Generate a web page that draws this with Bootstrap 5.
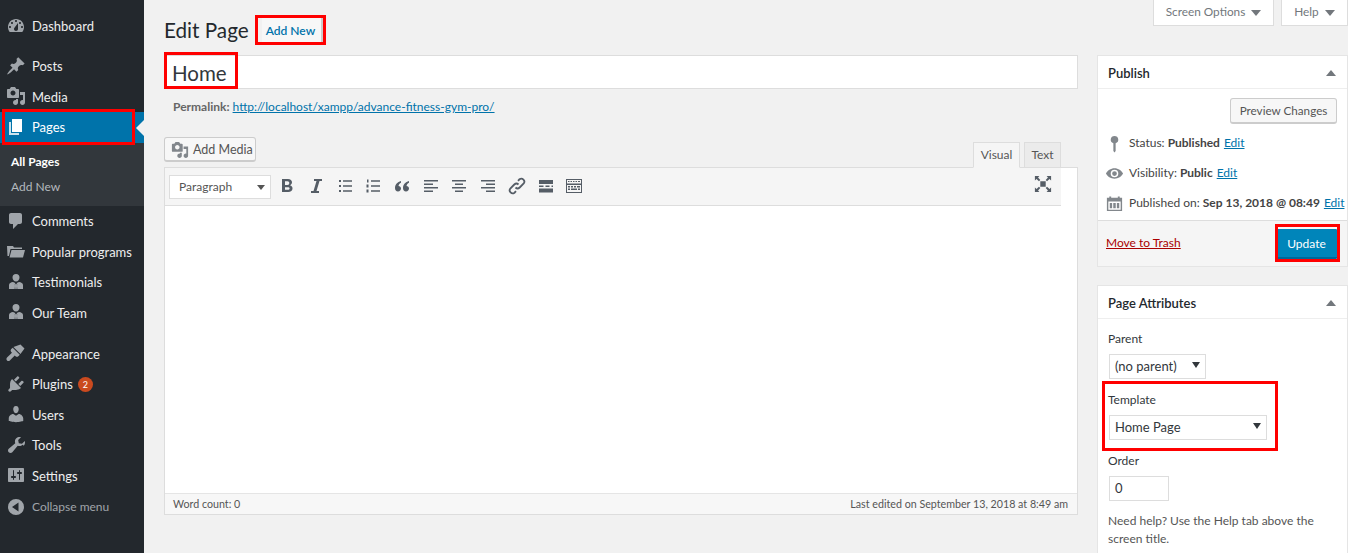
<!doctype html>
<html lang="en"><head><meta charset="utf-8"><title>Edit Page</title>
<link href="https://cdn.jsdelivr.net/npm/bootstrap@5.3.0/dist/css/bootstrap.min.css" rel="stylesheet">
<style>
html,body{height:553px;overflow:hidden}
body{background:#f1f1f1;font:13px/1.4 Lato,"Noto Sans",sans-serif;color:#444;position:relative}
a{color:#0073aa}
.wp-side{width:144px;height:553px;background:#23282d;flex:none;padding-top:10.500px}
.mi{height:30.500px;display:flex;align-items:center;color:#eee;padding:1px 0 0 32px;position:relative;white-space:nowrap}
.mi svg{position:absolute;left:6px;top:5px;width:20px;height:20px;fill:#a0a5aa}
.gap1{margin-top:9.500px}.gap2{margin-top:10.500px}
.mi.cur{background:#0073aa;color:#fff;height:31px}
.mi.cur svg{fill:#fff}
.mi.cur::after{content:"";position:absolute;right:0;top:8px;border:8px solid transparent;border-right-color:#f1f1f1;border-left:0}
.subm{background:#32373c;height:63px;padding-top:7px;font-size:12px}
.subm div{height:25px;padding-left:11px;display:flex;align-items:center;color:#b4b9be}
.subm div.on{color:#fff;font-weight:700}
.pill{display:inline-block;width:15px;height:15px;background:#ca4a1f;color:#fff;border-radius:50%;font-size:9px;line-height:15px;text-align:center;margin-left:5px}
.dim{color:#a0a5aa;font-size:12px;margin-top:1.500px}
.wp-main{width:914px;margin-left:20px;flex:none}
.titlebar{height:55px;display:flex;align-items:center;padding-top:5px}
.titlebar h1{font-size:20.700px;font-weight:400;color:#23282d;margin:0;line-height:1}
.addnew{margin-left:13px;border-right:2px solid #ccc;background:#f7f7f7;color:#0073aa;font-weight:600;font-size:12px;padding:4px 6px 2px 4px;height:24px;line-height:18px}
.tbox{height:34px;background:#fff;border:1px solid #ddd;font-size:20.500px;color:#32373c;padding:0 7px;line-height:34px}
.plink{font-size:12px;color:#666;padding:10px 0 0 9px;height:48px}
.addm{height:25px;width:92px;background:#f7f7f7;border:1px solid #ccc;border-bottom-width:2px;border-radius:3px;color:#555;font-size:12.500px;display:flex;align-items:center;padding:1px 0 0 6px;gap:4px}
.addm svg{width:18px;height:18px;fill:#82878c}
.edrow{height:30px}
.tabs{display:flex;gap:4px;margin-right:17px;align-self:flex-end}
.tb{height:26px;font-size:12px;color:#555;border:1px solid #ddd;background:#ebebeb;display:flex;align-items:center;margin-bottom:-1px;width:37px;justify-content:center}
.tb.act{background:#f5f5f5;border-bottom-color:#f5f5f5;width:47px;position:relative;z-index:1}
.edit{background:#fff;border:1px solid #ddd;height:348px;display:flex;flex-direction:column}
.tbar{height:38px;width:896px;background:#f5f5f5;border-bottom:1px solid #ddd;display:flex;align-items:center;padding-left:4px;position:relative;flex:none}
.fsel{width:102px;height:24px;background:#fff;border:1px solid #ddd;font-size:12px;color:#555;padding:1px 5px 0 9px;display:flex;align-items:center;justify-content:space-between;margin-right:2px}
.caret{width:0;height:0;border:4px solid transparent;border-top:5px solid #555;border-bottom:0}
.tbtn{width:28.700px;display:flex;justify-content:center;margin-top:-2px}
.tbtn svg{width:20px;height:20px;fill:#555d66}
.fs{position:absolute;left:869px;top:7px;width:18px;height:18px;fill:#555d66}
.ebody{flex:1;width:896px}
.estat{height:21px;background:#f7f7f7;border-top:1px solid #e5e5e5;display:flex;justify-content:space-between;font-size:10.700px;color:#555;padding:0 9px 0 8px;align-items:center;flex:none}
.wp-right{margin-left:19px;width:251px;flex:none;position:relative;padding-top:55px}
.scr{position:absolute;top:0;display:flex;align-items:center;height:26px;background:#fff;border:1px solid #ddd;border-top:0;font-size:11.800px;color:#72777c;justify-content:center;gap:6px}
.scr i{width:0;height:0;border:5px solid transparent;border-top:6px solid #72777c;border-bottom:0}
.box{background:#fff;border:1px solid #e5e5e5;margin-bottom:18px}
.bh{height:33px;border-bottom:1px solid #eee;font-weight:600;font-size:13px;color:#23282d;display:flex;align-items:center;justify-content:space-between;padding:2px 11px 0 10px}
.bh i{width:0;height:0;border:5px solid transparent;border-bottom:6px solid #72777c;border-top:0}
.pub{height:131px;padding:9px 10px 0;font-size:12px;color:#444}
.prev{margin-left:auto;margin-bottom:4px;width:107px;height:26px;background:#f7f7f7;border:1px solid #ccc;border-bottom-width:2px;border-radius:3px;color:#555;font-size:11.700px;display:flex;align-items:center;justify-content:center}
.pr{height:30px;display:flex;align-items:center;white-space:nowrap}
.pr svg{width:19px;height:19px;fill:#82878c;margin:0 5px 0 -3px;flex:none}
.pr b{font-weight:700;margin:0 3px}
.pr a{margin-left:1px}
.major{height:46px;background:#f5f5f5;border-top:1px solid #ddd;display:flex;align-items:center;justify-content:space-between;padding:0 10px 0 8px;font-size:12px}
.major a{color:#a00}
.upd{width:61px;height:30px;background:#0085ba;color:#fff;font-size:12px;border-radius:1px;border-bottom:2px solid #006799;display:flex;align-items:center;justify-content:center;margin-top:1px;padding-top:2px}
.pa{padding:12px 10px 0;font-size:12px;color:#444;height:260px}
.lab{color:#32373c;height:20px}
.sel{height:25px;background:#fff;border:1px solid #ddd;font-size:13px;display:flex;align-items:center;justify-content:space-between;padding:0 5px;margin:3px 0 0 1px;color:#32373c}
.sel i{width:0;height:0;border:4px solid transparent;border-top:6px solid #32373c;border-bottom:0;margin-top:-4px}
.lab-gap{margin-top:13px}
.hint{margin-top:11px;line-height:17.500px;color:#555}
.mark1{position:absolute;border:3px solid #f00;z-index:5}
</style></head>
<body>
<svg width="0" height="0" class="d-block"><defs>
<path id="ico-man" fill-rule="evenodd" d="M10 2a3.500 3.500 0 0 1 3.500 3.500c0 2-1.500 4-3.500 4s-3.500-2-3.500-4A3.500 3.500 0 0 1 10 2zM3 17v-4c0-1.700 2-2.800 4-3l2.300 1-.6 6zm14 0v-4c0-1.700-2-2.800-4-3l-2.300 1 .6 6zM9.300 17h1.400l.5-5h-2.400z"/>
<path id="ico-media" fill-rule="evenodd" d="M13 11V4c0-.55-.45-1-1-1h-1.670L9 1H5L3.670 3H2c-.55 0-1 .45-1 1v7c0 .55.45 1 1 1h10c.55 0 1-.45 1-1zM7 4.500c1.380 0 2.500 1.120 2.500 2.500S8.380 9.500 7 9.500 4.500 8.380 4.500 7 5.620 4.500 7 4.500zM14 6h5v10.500c0 1.380-1.120 2.500-2.500 2.500S14 17.880 14 16.500s1.120-2.500 2.500-2.500c.17 0 .34.020.5.050V9h-3V6zm-4 8.050V13h2v3.500c0 1.380-1.120 2.500-2.500 2.500S7 17.880 7 16.500 8.120 14 9.500 14c.17 0 .34.020.5.050z"/>
</defs></svg>
<div class="d-flex">
<nav class="wp-side">
<div class="mi"><svg viewBox="0 0 20 20"><path fill-rule="evenodd" d="M3.760 16h12.480c1.100-1.370 1.760-3.110 1.760-5 0-4.420-3.580-8-8-8s-8 3.580-8 8c0 1.890.66 3.630 1.760 5zM10 4c.55 0 1 .45 1 1s-.45 1-1 1-1-.45-1-1 .45-1 1-1zM6 6c.55 0 1 .45 1 1s-.45 1-1 1-1-.45-1-1 .45-1 1-1zm8 0c.55 0 1 .45 1 1s-.45 1-1 1-1-.45-1-1 .45-1 1-1zm-5.370 5.550L12 7v6c0 1.100-.9 2-2 2s-2-.9-2-2c0-.57.25-1.080.63-1.450zM4 10c.55 0 1 .45 1 1s-.45 1-1 1-1-.45-1-1 .45-1 1-1zm12 0c.55 0 1 .45 1 1s-.45 1-1 1-1-.45-1-1 .45-1 1-1z"/></svg>Dashboard</div>
<div class="mi gap1"><svg viewBox="0 0 20 20"><path d="M10.440 3.020l1.820-1.820 6.360 6.350-1.830 1.820c-1.050-.68-2.480-.57-3.410.36l-.75.75c-.92.93-1.040 2.350-.35 3.410l-1.830 1.820-2.410-2.410-2.800 2.790c-.42.42-3.380 2.710-3.800 2.290s1.860-3.390 2.280-3.810l2.790-2.790L4.100 9.360l1.830-1.820c1.050.69 2.480.57 3.400-.36l.75-.75c.93-.92 1.050-2.350.36-3.410z"/></svg>Posts</div>
<div class="mi"><svg viewBox="0 0 20 20"><use href="#ico-media"/></svg>Media</div>
<div class="mi cur"><svg viewBox="0 0 20 20"><path d="M6 15V2h10v13H6z"/><path opacity=".8" d="M5 16h8v2H3V5h2v11z"/></svg>Pages</div>
<div class="subm"><div class="on">All Pages</div><div>Add New</div></div>
<div class="mi"><svg viewBox="0 0 20 20"><path d="M5 2h9c1.100 0 2 .9 2 2v7c0 1.100-.9 2-2 2h-2l-5 5v-5H5c-1.100 0-2-.9-2-2V4c0-1.100.9-2 2-2z"/></svg>Comments</div>
<div class="mi"><svg viewBox="0 0 20 20"><path d="M1 5h6l1 1.500h8V8H4.500L3 15 1.500 15zM5.500 9H19l-2 7.500H3.500z"/></svg>Popular programs</div>
<div class="mi"><svg viewBox="0 0 20 20"><use href="#ico-man"/></svg>Testimonials</div>
<div class="mi"><svg viewBox="0 0 20 20"><use href="#ico-man"/></svg>Our Team</div>
<div class="mi gap2"><svg viewBox="0 0 20 20"><path d="M14.480 11.060L7.410 3.970 14.480 1.500l4.020 4.010zM6.700 4.680l7.070 7.080-1.430 1.410c-.78.78-2.040.78-2.830 0l-.71-.7-4.240 4.240-.71.71c-.78.78-2.040.78-2.830 0s-.78-2.050 0-2.830l4.950-4.950-.71-.7c-.78-.78-.78-2.050 0-2.830z"/></svg>Appearance</div>
<div class="mi"><svg viewBox="0 0 20 20"><path d="M13.110 4.360L9.870 7.600 8 5.730l3.240-3.240c.35-.34 1.050-.2 1.560.32.52.51.66 1.210.31 1.550zm-8 1.770l.91-1.120 9.010 9.010-1.190.84c-.71.71-2.630 1.160-3.820 1.160H6.140L4.900 17.260c-.59.59-1.540.59-2.120 0-.59-.58-.59-1.530 0-2.120l1.240-1.240v-3.880c0-1.130.4-3.070 1.090-3.890zm7.260 3.970l3.240-3.240c.34-.35 1.040-.21 1.550.31.52.51.66 1.210.31 1.550l-3.240 3.250z"/></svg>Plugins <span class="pill">2</span></div>
<div class="mi"><svg viewBox="0 0 20 20"><path d="M10 9.250c-2.270 0-2.730-3.440-2.730-3.440C7 4.020 7.820 2 9.970 2c2.160 0 2.980 2.020 2.710 3.810 0 0-.41 3.440-2.680 3.440zm0 2.570L12.720 10c2.390 0 4.520 2.330 4.520 4.530v2.490s-3.650 1.130-7.240 1.130c-3.650 0-7.240-1.130-7.240-1.130v-2.490c0-2.250 1.940-4.480 4.470-4.480z"/></svg>Users</div>
<div class="mi"><svg viewBox="0 0 20 20"><path d="M16.680 9.770c-1.340 1.340-3.300 1.670-4.950.99l-5.410 6.520c-.99.99-2.590.99-3.570 0-.99-.98-.99-2.580 0-3.570l6.520-5.420c-.68-1.650-.35-3.610.99-4.950 1.280-1.280 3.120-1.640 4.730-1.100l-2.810 2.810.63 3.160 3.160.63 2.810-2.810c.54 1.610.18 3.450-1.100 4.740z"/></svg>Tools</div>
<div class="mi"><svg viewBox="0 0 20 20"><path fill-rule="evenodd" d="M18 16V4c0-.55-.45-1-1-1H3c-.55 0-1 .45-1 1v12c0 .55.45 1 1 1h14c.55 0 1-.45 1-1zM8 11h1c.55 0 1 .45 1 1s-.45 1-1 1H8v1.500c0 .28-.22.5-.5.5s-.5-.22-.5-.5V13H6c-.55 0-1-.45-1-1s.45-1 1-1h1V5.500c0-.28.22-.5.5-.5s.5.22.5.5V11zm5-2h-1c-.55 0-1-.45-1-1s.45-1 1-1h1V5.500c0-.28.22-.5.5-.5s.5.22.5.5V7h1c.55 0 1 .45 1 1s-.45 1-1 1h-1v5.500c0 .28-.22.5-.5.5s-.5-.22-.5-.5V9z"/></svg>Settings</div>
<div class="mi dim"><svg viewBox="0 0 20 20"><path fill-rule="evenodd" d="M10 2a8 8 0 1 1 0 16 8 8 0 0 1 0-16zm2.500 3.500L6 10l6.500 4.500z"/></svg>Collapse menu</div>
</nav>
<main class="wp-main">
<div class="titlebar"><h1>Edit Page</h1><span class="addnew">Add New</span></div>
<div class="tbox">Home</div>
<div class="plink"><b>Permalink:</b> <a href="#">http://localhost/xampp/advance-fitness-gym-pro/</a></div>
<div class="d-flex justify-content-between edrow">
<div class="addm"><svg viewBox="0 0 20 20"><use href="#ico-media"/></svg>Add Media</div>
<div class="tabs"><div class="tb act">Visual</div><div class="tb">Text</div></div>
</div>
<div class="edit">
<div class="tbar">
<div class="fsel">Paragraph<span class="caret"></span></div>
<div class="tbtn"><svg viewBox="0 0 20 20"><path fill-rule="evenodd" d="M5 3h6c2.500 0 4 1.300 4 3.300 0 1.400-.8 2.500-2 3 1.600.4 2.500 1.600 2.500 3.200 0 2.200-1.700 3.500-4.300 3.500H5zm3 2.300V9h2.500c1.200 0 1.800-.7 1.800-1.900 0-1.100-.7-1.800-1.800-1.800zm0 5.900v2.500h2.700c1.200 0 1.900-.5 1.900-1.300 0-.8-.7-1.200-1.900-1.200z"/></svg></div>
<div class="tbtn"><svg viewBox="0 0 20 20"><path d="M8 3h8v2h-2.500L10.500 15H13v2H5v-2h2.500L10.500 5H8z"/></svg></div>
<div class="tbtn"><svg viewBox="0 0 20 20"><path d="M4 4h2v2H4zm4 .3h9v1.400H8zM4 9h2v2H4zm4 .3h9v1.400H8zM4 14h2v2H4zm4 .3h9v1.400H8z"/></svg></div>
<div class="tbtn"><svg viewBox="0 0 20 20"><path d="M4 3.500h1.500v3H4zm4 .8h9v1.400H8zM3.500 8.500h2v3h-2zm4.500.8h9v1.400H8zM3.500 13.500h2v3h-2zm4.500.8h9v1.400H8z"/></svg></div>
<div class="tbtn"><svg viewBox="0 0 20 20"><path d="M9 5C5.500 6 3 8.500 3 12c0 2 1.200 3.500 3 3.500S9 14 9 12.500 7.800 10 6.500 10c.2-1.500 1.200-2.700 2.500-3.300zm8 0c-3.500 1-6 3.500-6 7 0 2 1.200 3.500 3 3.500s3-1.500 3-3-1.200-2.500-2.500-2.500c.2-1.500 1.200-2.700 2.500-3.300z"/></svg></div>
<div class="tbtn"><svg viewBox="0 0 20 20"><path d="M3 4h14v1.500H3zm0 3.500h9V9H3zm0 3.500h14v1.500H3zm0 3.500h9V16H3z"/></svg></div>
<div class="tbtn"><svg viewBox="0 0 20 20"><path d="M3 4h14v1.500H3zm3 3.500h8V9H6zM3 11h14v1.500H3zm3 3.500h8V16H6z"/></svg></div>
<div class="tbtn"><svg viewBox="0 0 20 20"><path d="M3 4h14v1.500H3zm5 3.500h9V9H8zM3 11h14v1.500H3zm5 3.500h9V16H8z"/></svg></div>
<div class="tbtn"><svg viewBox="0 0 20 20" fill="none"><path fill="none" stroke="#555d66" stroke-width="1.800" d="M8.500 11.500a3 3 0 0 0 4.200 0l4-4a3 3 0 0 0-4.200-4.200l-1.500 1.500M11.500 8.500a3 3 0 0 0-4.200 0l-4 4a3 3 0 0 0 4.200 4.200l1.500-1.500"/></svg></div>
<div class="tbtn"><svg viewBox="0 0 20 20"><path d="M3 4h14v4H3zm0 5.500h4.500v1.500H3zm6.500 0h4v1.500h-4zm6 0H17v1.500h-1.500zM3 12.500h14v4H3z"/></svg></div>
<div class="tbtn"><svg viewBox="0 0 20 20"><path fill-rule="evenodd" d="M2 3h16v14H2zm1 1v3.500h14V4zm0 5v7h14V9zm1-4h1.500v1H4zm2.500 0H8v1H6.500zM9 5h1.500v1H9zm2.500 0H13v1h-1.500zM14 5h2v1h-2zM4 10h2v1.500H4zm3 0h2v1.500H7zm3 0h2v1.500h-2zm3 0h3v1.500h-3zM4 12.500h2V14H4zm3 0h6V14H7zm7 0h2V14h-2z"/></svg></div>
<svg class="fs" viewBox="0 0 20 20"><path d="M7 7h6v6H7zM1 1h5L4.500 2.800 7 5.500 5.500 7 2.800 4.500 1 6zm18 0v5l-1.800-1.500L14.500 7 13 5.500l2.500-2.700L14 1zM1 19v-5l1.800 1.500L5.500 13 7 14.500l-2.500 2.700L6 19zm18 0h-5l1.500-1.800L13 14.500 14.500 13l2.700 2.500L19 14z"/></svg>
</div>
<div class="ebody"></div>
<div class="estat"><span>Word count: 0</span><span>Last edited on September 13, 2018 at 8:49 am</span></div>
</div>
</main>
<aside class="wp-right">
<div class="scr" style="left:56px;width:121px">Screen Options <i></i></div>
<div class="scr" style="left:184px;width:67px">Help <i></i></div>
<div class="box"><div class="bh">Publish<i></i></div>
<div class="pub">
<div class="prev">Preview Changes</div>
<div class="pr"><svg viewBox="0 0 20 20"><path d="M10 2a4 4 0 0 1 1.200 7.800V18l-1.200 1.500L8.800 18V9.800A4 4 0 0 1 10 2z"/></svg>Status:<b>Published</b><a href="#">Edit</a></div>
<div class="pr"><svg viewBox="0 0 20 20"><path fill-rule="evenodd" d="M10 4.500c4 0 7.500 2.500 9 5.500-1.500 3-5 5.500-9 5.500S2.500 13 1 10c1.500-3 5-5.500 9-5.500zM10 6a4 4 0 1 0 0 8 4 4 0 0 0 0-8zm0 1.500a2.500 2.500 0 1 1 0 5 2.500 2.500 0 0 1 0-5z"/></svg>Visibility:<b>Public</b><a href="#">Edit</a></div>
<div class="pr"><svg viewBox="0 0 20 20"><path fill-rule="evenodd" d="M2 4h2.500V2.500h2V4h7V2.500h2V4H18v14H2zm1.500 4v8.500h13V8zM5 9.500h2.500V15H5zm3.700 0h2.600V15H8.700zm3.800 0H15V15h-2.500z"/></svg>Published on:<b>Sep 13, 2018 @ 08:49</b><a href="#">Edit</a></div>
</div>
<div class="major"><a href="#">Move to Trash</a><div class="upd">Update</div></div>
</div>
<div class="box"><div class="bh">Page Attributes<i></i></div>
<div class="pa">
<div class="lab">Parent</div>
<div class="sel" style="width:97px"><span>(no parent)</span><i></i></div>
<div class="lab lab-gap">Template</div>
<div class="sel" style="width:158px"><span>Home Page</span><i></i></div>
<div class="lab lab-gap">Order</div>
<div class="sel" style="width:60px">0</div>
<div class="hint">Need help? Use the Help tab above the screen title.</div>
</div></div>
</aside>
</div>
<div class="mark1" style="left:255px;top:15px;width:71px;height:30px"></div>
<div class="mark1" style="left:164px;top:52px;width:74px;height:37px"></div>
<div class="mark1" style="left:2px;top:109px;width:133px;height:36px"></div>
<div class="mark1" style="left:1275px;top:224px;width:65px;height:38px"></div>
<div class="mark1" style="left:1102px;top:381px;width:176px;height:70px"></div>
<script src="https://cdn.jsdelivr.net/npm/bootstrap@5.3.0/dist/js/bootstrap.bundle.min.js"></script>
</body></html>
